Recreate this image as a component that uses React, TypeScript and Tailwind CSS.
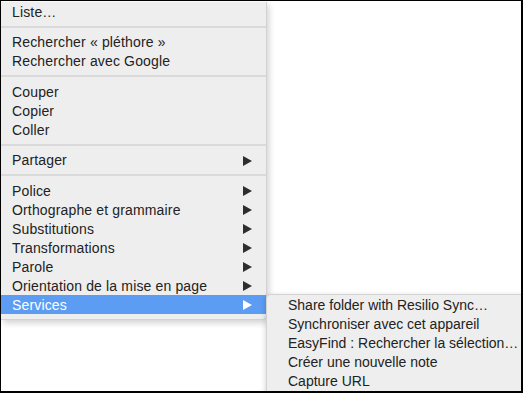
import React from "react";

type Item = { label: string; sub?: boolean; active?: boolean } | "sep";

const items: Item[] = [
  { label: "Liste…" },
  "sep",
  { label: "Rechercher « pléthore »" },
  { label: "Rechercher avec Google" },
  "sep",
  { label: "Couper" },
  { label: "Copier" },
  { label: "Coller" },
  "sep",
  { label: "Partager", sub: true },
  "sep",
  { label: "Police", sub: true },
  { label: "Orthographe et grammaire", sub: true },
  { label: "Substitutions", sub: true },
  { label: "Transformations", sub: true },
  { label: "Parole", sub: true },
  { label: "Orientation de la mise en page", sub: true },
  { label: "Services", sub: true, active: true },
];

const services = [
  "Share folder with Resilio Sync…",
  "Synchroniser avec cet appareil",
  "EasyFind : Rechercher la sélection…",
  "Créer une nouvelle note",
  "Capture URL",
];

const Arrow = ({ white }: { white?: boolean }) => (
  <svg width="9" height="10" viewBox="0 0 9 10" className="shrink-0">
    <polygon points="0,0 9,5 0,10" fill={white ? "#ffffff" : "#2e2e2e"} />
  </svg>
);

const App = () => {
  return (
    <div
      className="relative w-[523px] h-[393px] overflow-hidden bg-white border-t border-l border-r-2 border-b-2 border-black text-[14px] text-[#222]"
      style={{ fontFamily: '"Liberation Sans", Arial, sans-serif' }}
    >
      {/* main context menu, top is cut off */}
      <div className="absolute left-0 top-[1px] w-[266px] bg-[#eeeeee] border-r border-b border-[#d2d2d2] rounded-br-[5px] pb-[5px] shadow-[2px_3px_6px_rgba(0,0,0,0.18)] tracking-[0.15px]">
        {items.map((it, i) =>
          it === "sep" ? (
            <div key={i} className="h-[11.5px] flex items-center">
              <div className="w-full h-[2px] bg-[#dadada]" />
            </div>
          ) : (
            <div
              key={i}
              className={
                "h-[19px] flex items-center justify-between pl-[11px] pr-[14px] pt-[1px] " +
                (it.active ? "bg-[#5c9cf2] text-white" : "")
              }
            >
              <span>{it.label}</span>
              {it.sub && <Arrow white={it.active} />}
            </div>
          )
        )}
      </div>

      {/* services submenu */}
      <div className="absolute left-[265px] top-[293px] w-[270px] h-[110px] bg-[#eeeeee] border-l border-t border-[#d2d2d2] rounded-tl-[5px] shadow-[-1px_1px_5px_rgba(0,0,0,0.15)]">
        {services.map((s) => (
          <div key={s} className="h-[19px] flex items-center pl-[21px] pt-[1px]">
            {s}
          </div>
        ))}
      </div>
    </div>
  );
};

export default App;
